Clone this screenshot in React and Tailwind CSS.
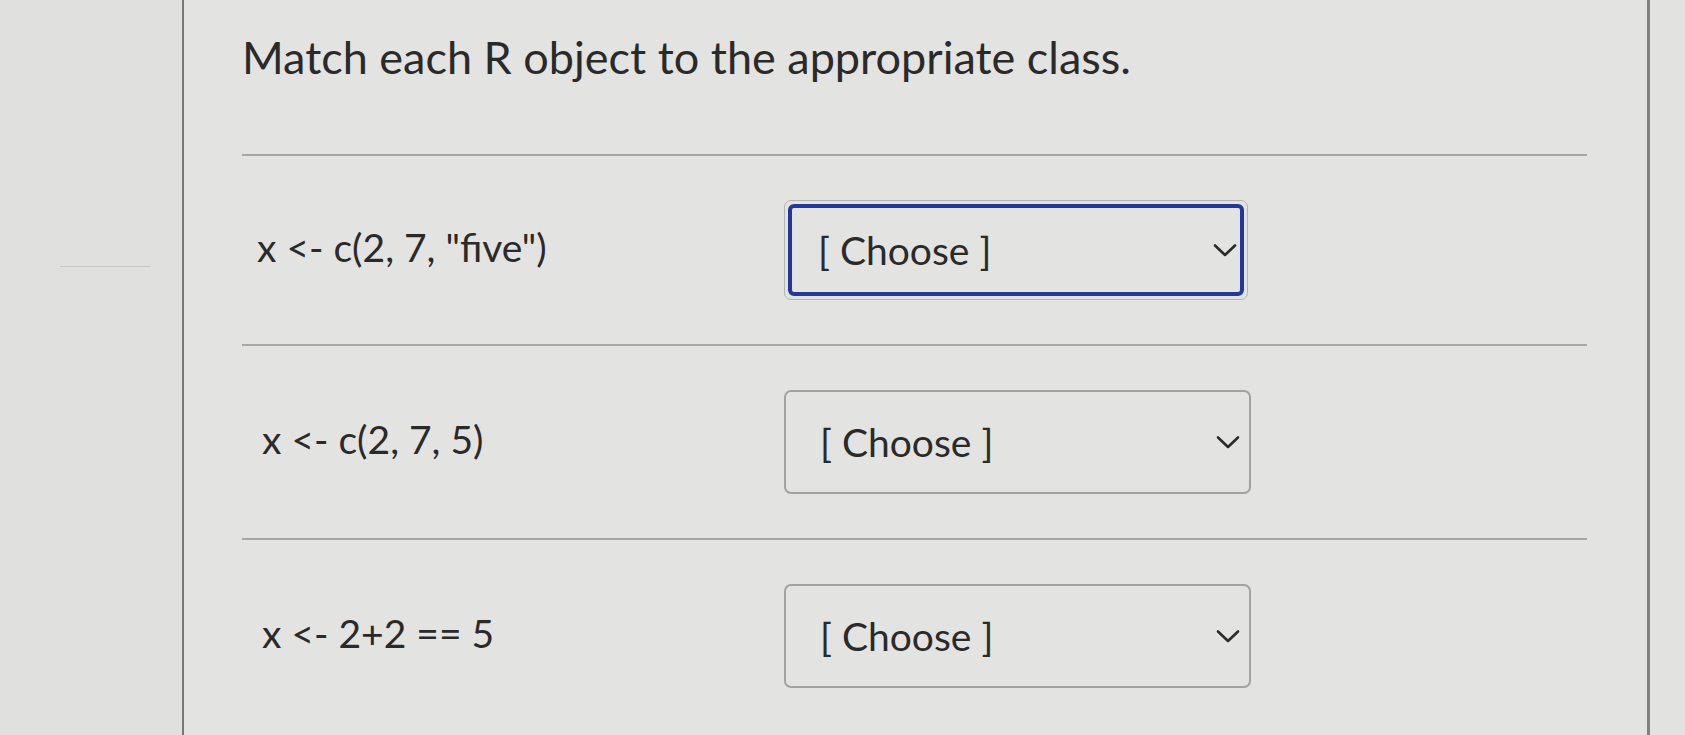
import React from "react";

const rows = [
  { code: 'x <- c(2, 7, "five")', focused: true },
  { code: "x <- c(2, 7, 5)" },
  { code: "x <- 2+2 == 5" },
];

const Chevron = () => (
  <svg width="24" height="15" viewBox="0 0 24 15" fill="none" className="shrink-0">
    <polyline points="2,2.5 12,12 22,2.5" stroke="#2b2b2b" strokeWidth="2.6" strokeLinecap="round" strokeLinejoin="round" />
  </svg>
);

const ChooseSelect = ({ focused }) => (
  <div
    className={
      focused
        ? "w-[464px] h-[100px] rounded-[7px] border border-[#b4b4b2] p-[3px]"
        : "w-[467px] h-[104px] rounded-[7px] border-2 border-[#a2a2a0]"
    }
  >
    <div
      className={
        focused
          ? "h-full rounded-[6px] border-4 border-[#23399a] flex items-center justify-between pl-[26px] pr-[3px]"
          : "h-full flex items-center justify-between pl-[34px] pr-[9px]"
      }
    >
      <span className="text-[39px] leading-none text-[#2a2a2a]">[ Choose ]</span>
      <Chevron />
    </div>
  </div>
);

export default function App() {
  return (
    <div className="flex h-[735px] w-full overflow-hidden bg-[#e3e3e1]" style={{ fontFamily: "Lato, 'Open Sans', sans-serif" }}>
      {/* left rail */}
      <div className="w-[184px] shrink-0 border-r-2 border-[#777775] bg-[#e0e0de] flex flex-col">
        <div className="h-[266px]" />
        <div className="ml-[60px] w-[90px] h-px bg-[#c8c8c6]" />
      </div>

      {/* question body */}
      <div className="w-[1466px] shrink-0 border-r-[3px] border-[#80807e] pl-[58px]">
        <h1 className="pt-[28px] text-[45px] leading-[58px] text-[#2a2a2a] font-normal">
          Match each R object to the appropriate class.
        </h1>

        <div className="mt-[68px]">
          {rows.map((r, i) => (
            <div key={r.code}>
              <div className="w-[1345px] h-[2px] bg-[#a8a8a6]" />
              <div className="flex items-center py-[44px]">
                <div
                  className={
                    i === 0
                      ? "w-[542px] pl-[15px] text-[39px] leading-none text-[#2a2a2a] -mt-[6px]"
                      : "w-[542px] pl-[20px] text-[39px] leading-none text-[#2a2a2a] -mt-[6px]"
                  }
                >
                  {r.code}
                </div>
                <ChooseSelect focused={r.focused} />
              </div>
            </div>
          ))}
        </div>
      </div>

      <div className="flex-1 bg-[#e2e2e0]" />
    </div>
  );
}
